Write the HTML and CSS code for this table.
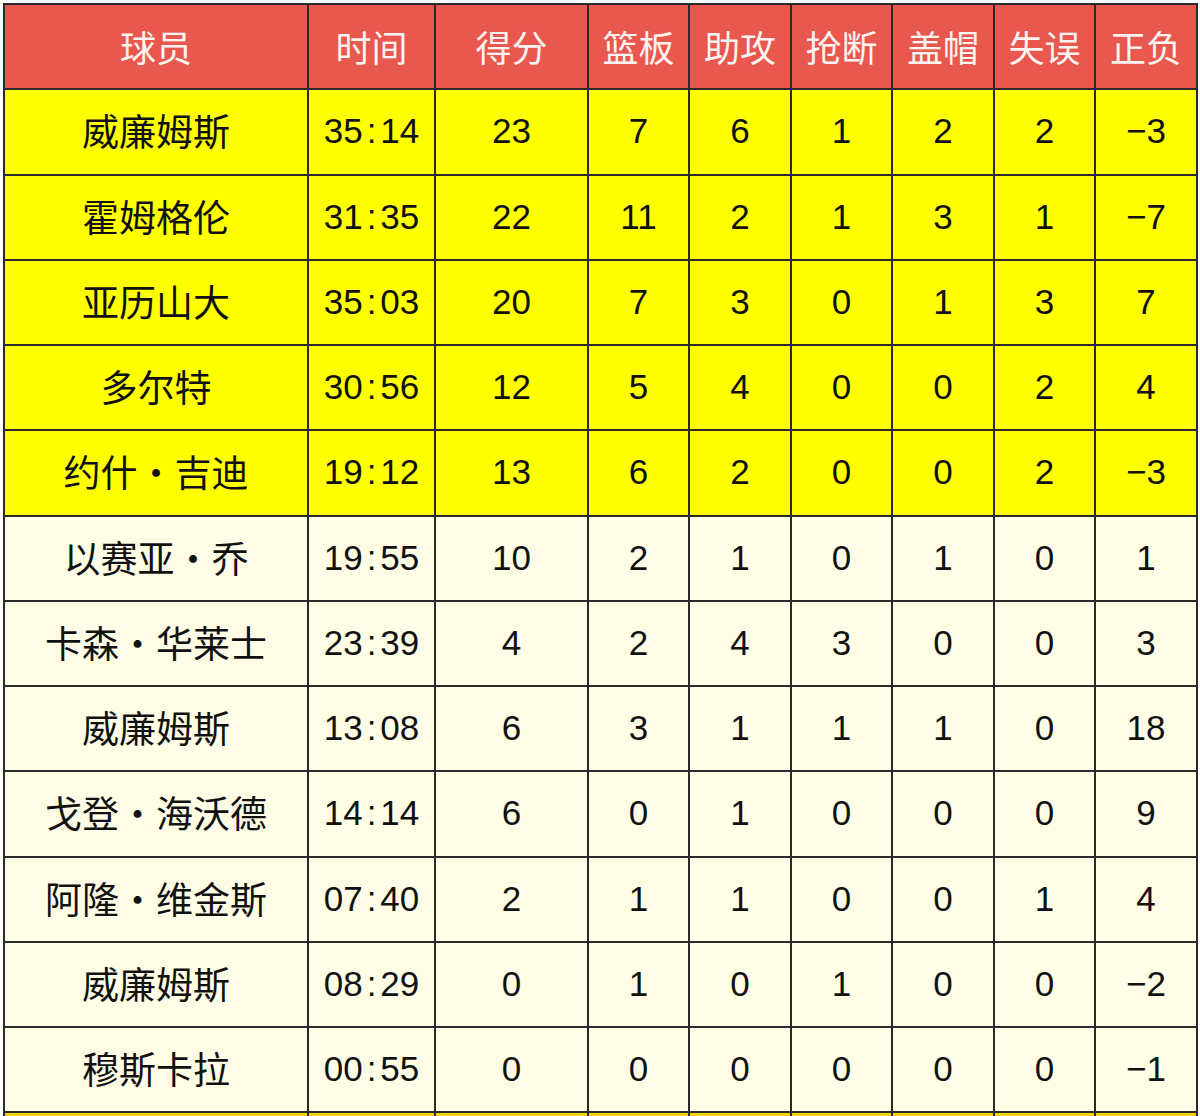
FILE: index.html
```html
<!DOCTYPE html>
<html lang="zh">
<head>
<meta charset="utf-8">
<link rel="stylesheet" href="styles.css">
</head>
<body>
<table class="stats">
  <colgroup>
    <col class="c-name"><col class="c-time"><col class="c-pts"><col class="c-reb"><col class="c-ast"><col class="c-stl"><col class="c-blk"><col class="c-to"><col class="c-pm">
  </colgroup>
  <thead>
    <tr><th>球员</th><th>时间</th><th>得分</th><th>篮板</th><th>助攻</th><th>抢断</th><th>盖帽</th><th>失误</th><th>正负</th></tr>
  </thead>
  <tbody>
    <tr class="starter"><td class="name">威廉姆斯</td><td>35<span class="colon">:</span>14</td><td>23</td><td>7</td><td>6</td><td>1</td><td>2</td><td>2</td><td>−3</td></tr>
    <tr class="starter"><td class="name">霍姆格伦</td><td>31<span class="colon">:</span>35</td><td>22</td><td>11</td><td>2</td><td>1</td><td>3</td><td>1</td><td>−7</td></tr>
    <tr class="starter"><td class="name">亚历山大</td><td>35<span class="colon">:</span>03</td><td>20</td><td>7</td><td>3</td><td>0</td><td>1</td><td>3</td><td>7</td></tr>
    <tr class="starter"><td class="name">多尔特</td><td>30<span class="colon">:</span>56</td><td>12</td><td>5</td><td>4</td><td>0</td><td>0</td><td>2</td><td>4</td></tr>
    <tr class="starter"><td class="name">约什・吉迪</td><td>19<span class="colon">:</span>12</td><td>13</td><td>6</td><td>2</td><td>0</td><td>0</td><td>2</td><td>−3</td></tr>
    <tr class="bench"><td class="name">以赛亚・乔</td><td>19<span class="colon">:</span>55</td><td>10</td><td>2</td><td>1</td><td>0</td><td>1</td><td>0</td><td>1</td></tr>
    <tr class="bench"><td class="name">卡森・华莱士</td><td>23<span class="colon">:</span>39</td><td>4</td><td>2</td><td>4</td><td>3</td><td>0</td><td>0</td><td>3</td></tr>
    <tr class="bench"><td class="name">威廉姆斯</td><td>13<span class="colon">:</span>08</td><td>6</td><td>3</td><td>1</td><td>1</td><td>1</td><td>0</td><td>18</td></tr>
    <tr class="bench"><td class="name">戈登・海沃德</td><td>14<span class="colon">:</span>14</td><td>6</td><td>0</td><td>1</td><td>0</td><td>0</td><td>0</td><td>9</td></tr>
    <tr class="bench"><td class="name">阿隆・维金斯</td><td>07<span class="colon">:</span>40</td><td>2</td><td>1</td><td>1</td><td>0</td><td>0</td><td>1</td><td>4</td></tr>
    <tr class="bench"><td class="name">威廉姆斯</td><td>08<span class="colon">:</span>29</td><td>0</td><td>1</td><td>0</td><td>1</td><td>0</td><td>0</td><td>−2</td></tr>
    <tr class="bench"><td class="name">穆斯卡拉</td><td>00<span class="colon">:</span>55</td><td>0</td><td>0</td><td>0</td><td>0</td><td>0</td><td>0</td><td>−1</td></tr>
    <tr class="total"><td></td><td></td><td></td><td></td><td></td><td></td><td></td><td></td><td></td></tr>
  </tbody>
</table>
</body>
</html>
```

FILE: styles.css
```css
html, body {
  margin: 0;
  padding: 0;
  background: #ffffff;
}
body {
  padding: 3px 0 0 3px;
  overflow: hidden;
  height: 1116px;
  box-sizing: border-box;
}
.stats {
  border-collapse: collapse;
  table-layout: fixed;
  width: 1195px;
  font-family: "Liberation Sans", "Noto Sans CJK SC", Arial, sans-serif;
  font-size: 35px;
  color: #111;
}
.c-name { width: 304px; }
.c-time { width: 127px; }
.c-pts { width: 153px; }
.c-reb { width: 101px; }
.c-ast { width: 102px; }
.c-stl { width: 101px; }
.c-blk { width: 102px; }
.c-to { width: 101px; }
.c-pm { width: 102px; }

.stats th, .stats td {
  border: 2px solid #2a2a2a;
  height: 83.25px;
  padding: 0 0 2px;
  box-sizing: border-box;
  text-align: center;
  vertical-align: middle;
  white-space: nowrap;
  line-height: 1;
}
.stats th, .stats td {
  height: 85.25px;
}
.stats th {
  background: #e8584e;
  color: #fdf3f0;
  font-family: "Noto Sans CJK SC", sans-serif;
  font-weight: normal;
  font-size: 36px;
}
.stats td.name {
  font-family: "Noto Sans CJK SC", sans-serif;
  font-size: 37px;
}
.colon {
  margin: 0 4px;
}
.stats tr.starter td { background: #ffff00; }
.stats tr.bench td { background: #fffde6; }
.stats tr.total td {
  background: #f5d30f;
  height: 4px;
  padding: 0;
  border-bottom: 0;
}
```
